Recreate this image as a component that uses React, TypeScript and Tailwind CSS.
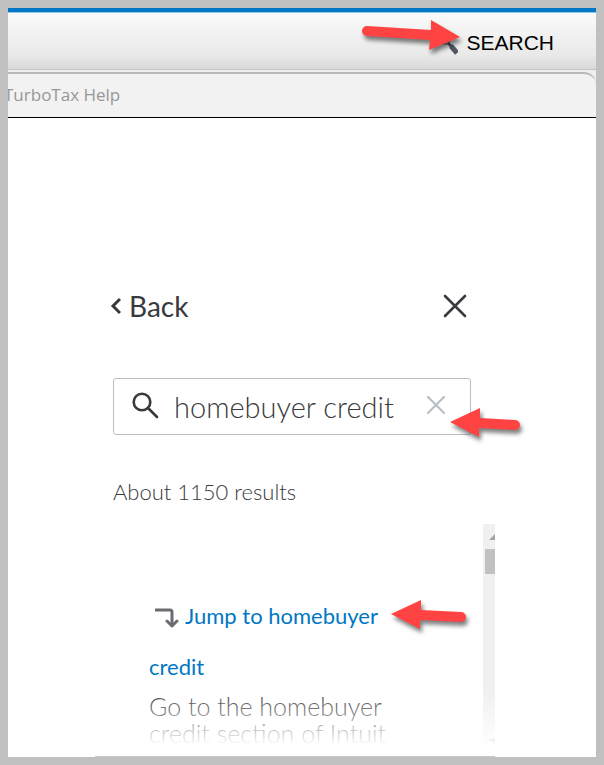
import { clsx } from "clsx";

type ArrowProps = {
  className?: string;
};

const arrowClasses = "pointer-events-none absolute drop-shadow-[2px_4px_2px_rgba(0,0,0,0.5)]";

function LongArrow({ className }: ArrowProps) {
  return (
    <svg width="104" height="44" viewBox="0 0 104 44" aria-hidden="true" className={clsx(arrowClasses, className)}>
      <path d="M7 6 L71 10 L71 0 L100 17 L69 30 L70 20 L7 16 A5 5 0 0 1 7 6 Z" fill="#ff4242" />
    </svg>
  );
}

function ShortArrow({ className, tail = 70 }: ArrowProps & { tail?: number }) {
  return (
    <svg width="76" height="36" viewBox="0 0 76 36" aria-hidden="true" className={clsx(arrowClasses, className)}>
      <path d={`M0 14 L30 0 L30 10 L${tail} 12 A5 5 0 0 1 ${tail} 22 L29 20 L29 29 Z`} fill="#ff4242" />
    </svg>
  );
}

function Header() {
  return (
    <header>
      <div className="h-[5px] border-b border-[#8cc6ec] bg-[#0077c5]" />
      <div className="flex h-[57px] items-center justify-end border-b border-[#c4c4c4] bg-linear-to-b from-[#fafafa] via-[#e9e9e9] via-75% to-[#d9d9d9] pr-[42px] pt-[3px]">
        <button className="relative flex items-center gap-2 font-['Liberation_Sans',sans-serif] text-[21px] leading-6 text-black">
          <svg width="20" height="24" viewBox="0 0 20 24" aria-hidden="true">
            <circle cx="7" cy="8" r="5" fill="none" stroke="#8b919b" strokeWidth="2" />
            <path d="M10 12 L14 16" stroke="#505663" strokeWidth="3" />
            <path d="M13 15 L19 22" stroke="#505663" strokeWidth="5" />
          </svg>
          SEARCH
          <LongArrow className="-left-[78px] -top-[11px]" />
        </button>
      </div>
      <div className="border-b border-black bg-[#eeeeee] pt-0.5">
        <div className="-ml-2 flex h-[45px] items-center rounded-tr-xl border-t-2 border-[#b9b9b9] bg-[#f2f2f2] pb-0.5 pl-1">
          <span className="font-['Open_Sans',sans-serif] text-[17px] leading-6 text-[#979797]">
            TurboTax Help
          </span>
        </div>
      </div>
    </header>
  );
}

function SearchBox() {
  return (
    <div className="relative mt-[52px] flex h-[57px] items-center rounded-[3px] border border-[#babec5] pb-1 pl-[18px] pr-6">
      <svg width="28" height="28" viewBox="0 0 28 28" fill="none" stroke="#393a3d" strokeWidth="2.6" aria-hidden="true" className="shrink-0">
        <circle cx="10" cy="11" r="8.3" />
        <path d="M16 17 L25 26" strokeLinecap="round" />
      </svg>
      <input
        type="text"
        aria-label="Search help"
        defaultValue="homebuyer credit"
        className="ml-[14px] min-w-0 flex-1 bg-transparent pt-1 text-[29px] leading-8 font-light text-[#393a3d] outline-none"
      />
      <button aria-label="Clear search" className="shrink-0">
        <svg width="20" height="20" viewBox="0 0 20 20" stroke="#babec5" strokeWidth="2.2" strokeLinecap="round">
          <path d="M2 2 L18 18 M18 2 L2 18" />
        </svg>
      </button>
      <ShortArrow className="-right-[56px] top-[29px]" tail={65} />
    </div>
  );
}

function Scrollbar() {
  return (
    <div className="flex w-3 shrink-0 flex-col items-end overflow-hidden bg-[#f0f0f0]" aria-hidden="true">
      <svg width="6" height="25" viewBox="0 0 6 25">
        <path d="M0 16 L6 10 V16 Z" fill="#a3a3a3" />
      </svg>
      <div className="h-[25px] w-[10px] bg-[#c1c1c1]" />
      <svg width="6" height="6" viewBox="0 0 6 6" className="mb-[11px] mt-auto">
        <path d="M0 0 H6 V6 Z" fill="#707070" />
      </svg>
    </div>
  );
}

function Results() {
  return (
    <section className="relative mt-5 flex min-h-[231px] flex-1 border-b border-[#c8c8c8]">
      <div className="flex-1 pl-[54px] pr-[90px] pt-[66px]">
        <a href="#jump" className="relative block text-[22px] leading-[51px] text-[#0077c5]">
          <svg
            width="24"
            height="20"
            viewBox="0 0 24 20"
            fill="none"
            stroke="#6b6c72"
            strokeWidth="3"
            aria-hidden="true"
            className="mx-[6px] inline-block"
          >
            <path d="M1 2 H15 Q17 2 17 4 V17" strokeLinecap="round" />
            <path d="M12 13 L17 18 L22 13" strokeLinecap="round" strokeLinejoin="round" />
          </svg>
          Jump to homebuyer credit
          <ShortArrow className="left-[242px] top-[10px]" />
        </a>
        <p className="pt-px text-[25px] leading-[27px] font-light text-[#393a3d]">
          Go to the homebuyer credit section of Intuit
        </p>
      </div>
      <Scrollbar />
      <div className="pointer-events-none absolute inset-x-0 bottom-0 h-[65px] bg-linear-to-b from-white/0 to-white to-85%" />
    </section>
  );
}

export default function App() {
  return (
    <div className="flex min-h-screen flex-col border-8 border-[#c0c0c0] bg-white font-[Lato,sans-serif]">
      <div className="flex flex-1 flex-col overflow-hidden">
        <Header />
        <main className="flex flex-1 flex-col pl-[87px] pr-[101px] pt-[168px]">
          <div className="pl-[18px] pr-6">
            <div className="flex h-10 items-center justify-between text-[#393a3d]">
              <button className="-ml-1 flex items-center gap-2 text-[28px] leading-10">
                <svg width="12" height="18" viewBox="0 0 12 18" fill="none" stroke="currentColor" strokeWidth="3">
                  <path d="M11 2 L4 9 L11 16" />
                </svg>
                Back
              </button>
              <button aria-label="Close" className="mr-1">
                <svg width="24" height="24" viewBox="0 0 24 24" stroke="currentColor" strokeWidth="2.6" strokeLinecap="round">
                  <path d="M2 2 L22 22 M22 2 L2 22" />
                </svg>
              </button>
            </div>
            <SearchBox />
            <p className="mt-[45px] text-[22px] leading-6 font-light text-[#393a3d]">About 1150 results</p>
          </div>
          <Results />
        </main>
      </div>
    </div>
  );
}
